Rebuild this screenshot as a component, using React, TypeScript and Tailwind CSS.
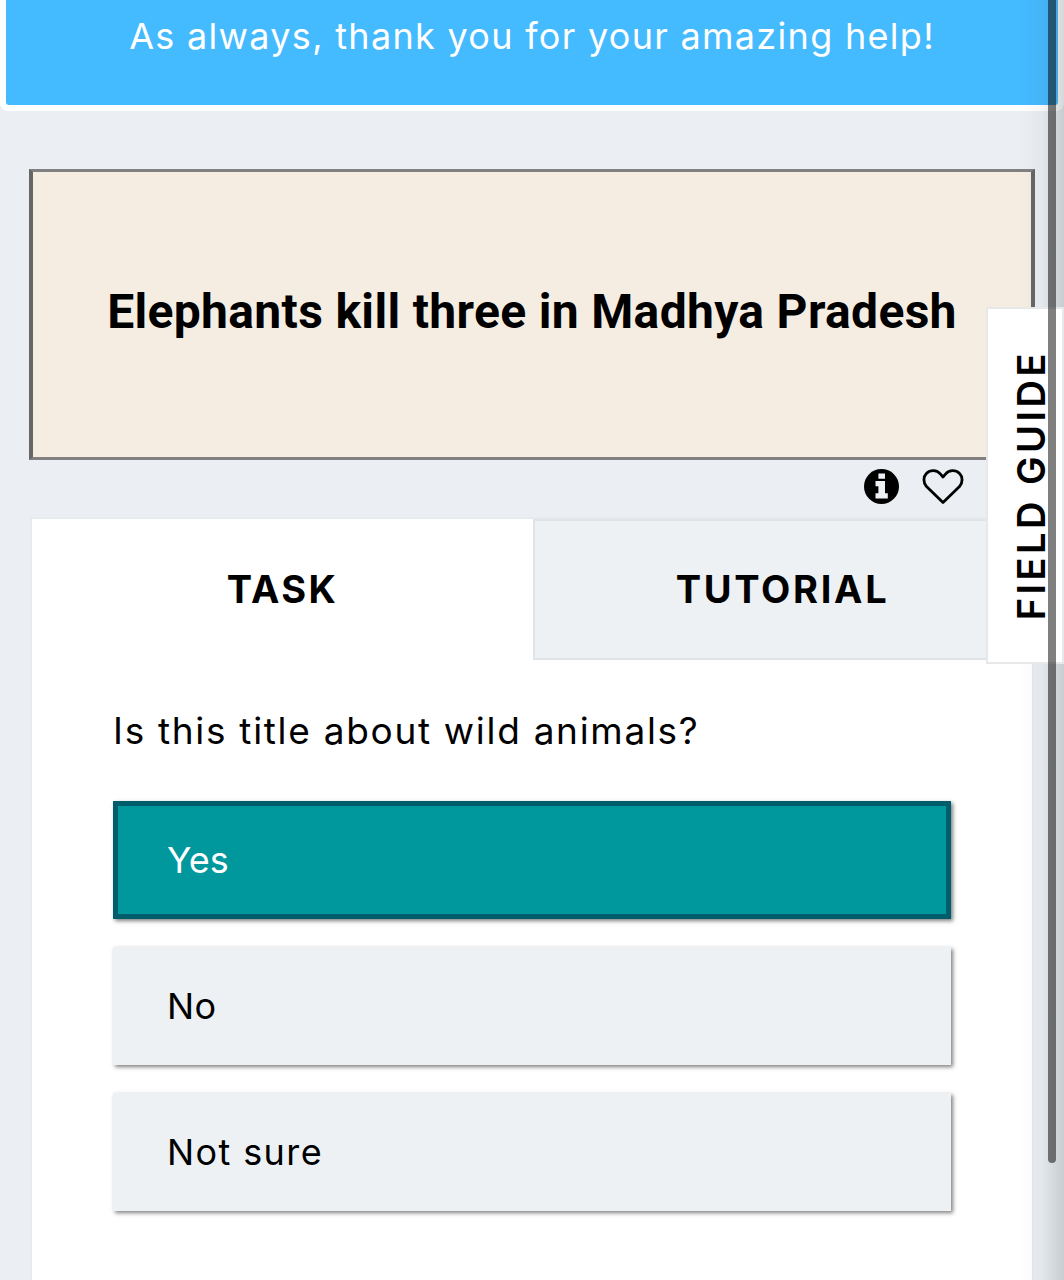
import { useState } from 'react';
import clsx from 'clsx';

type AnswerProps = {
  label: string;
  tracking: string;
  selected: boolean;
  onSelect: () => void;
};

const answers = [
  { label: 'Yes', tracking: 'tracking-normal' },
  { label: 'No', tracking: 'tracking-[0.3px]' },
  { label: 'Not sure', tracking: 'tracking-[1.4px]' },
];

const Answer = ({ label, tracking, selected, onSelect }: AnswerProps) => (
  <button
    type="button"
    onClick={onSelect}
    className={clsx(
      'flex items-center w-full h-[118px] pl-[49px] text-[36px] leading-none border-[5px] shadow-[2px_2px_4px_rgba(0,0,0,0.5)]',
      tracking,
      selected
        ? 'bg-[#00979d] border-[#005d69] text-white'
        : 'bg-[#edf1f4] border-[#edf1f4] text-black'
    )}
  >
    {label}
  </button>
);

const InfoIcon = () => (
  <svg viewBox="0 0 35 35" className="w-[35px] h-[35px]" aria-label="info">
    <circle cx="17.5" cy="17.5" r="17.5" fill="#000" />
    <path
      d="M14.4 4.4h6.6v5.4h-6.6zM11.5 12h9.5v12.2h2.8v5.2H11.5v-5.2h2.9v-7H11.5z"
      fill="#edf1f6"
    />
  </svg>
);

const HeartIcon = () => (
  <svg viewBox="0 0 42 36" className="w-[42px] h-[36px]" aria-label="favorite">
    <path
      d="M21 33.5 4.5 17.5C1 13.6 1.2 7.7 4.4 4.5 8.4.6 14.8.8 18.3 4.9L21 8l2.7-3.1C27.2.8 33.6.6 37.6 4.5c3.2 3.2 3.4 9.1-.1 13z"
      fill="none"
      stroke="#000"
      strokeWidth="2.8"
      strokeLinejoin="round"
    />
  </svg>
);

const App = () => {
  const [answer, setAnswer] = useState('Yes');

  return (
    <div className="relative flex flex-col w-[1064px] h-[1280px] overflow-hidden bg-[#ebeff4] font-['Inter',sans-serif] text-black">
      <header className="h-[111px] shrink-0 bg-white border-x-[6px] border-b-[6px] border-white rounded-b-lg">
        <div className="flex justify-center h-[105px] rounded-b-[3px] bg-[#44baff] pt-[14px]">
          <p className="text-[36px] leading-[44px] tracking-[1.3px] text-white whitespace-nowrap">
            As always, thank you for your amazing help!
          </p>
        </div>
      </header>

      <main className="flex flex-col flex-1 mt-[58px] ml-[29px] w-[1006px]">
        <div className="flex items-center justify-center h-[291px] shrink-0 border-x-[4px] border-y-[3px] border-x-[#666666] border-y-[#808080] bg-[#f5ede2] pb-[6px]">
          <h1 className="font-['Roboto',sans-serif] font-bold text-[48px] leading-none tracking-[0.33px] whitespace-nowrap">
            Elephants kill three in Madhya Pradesh
          </h1>
        </div>

        <div className="flex justify-end items-start gap-[23px] h-[57px] shrink-0 pt-[9px] pr-[71px]">
          <InfoIcon />
          <HeartIcon />
        </div>

        <section className="flex flex-col flex-1 ml-px w-[1004px] bg-white border-x-2 border-t-2 border-[#e8ebee]">
          <nav className="flex h-[141px] shrink-0 text-[38px] font-bold">
            <div className="flex items-center justify-center w-[501px] tracking-[2.4px]">TASK</div>
            <div className="flex items-center justify-center w-[499px] bg-[#edf1f4] border-2 border-[#dfe4e8] tracking-[2.7px]">
              TUTORIAL
            </div>
          </nav>

          <div className="pl-[81px] w-[919px]">
            <p className="pt-[48px] h-[141px] text-[37px] leading-[46px] tracking-[1.7px] whitespace-nowrap">
              Is this title about wild animals?
            </p>
            <div className="flex flex-col gap-[28px]">
              {answers.map(({ label, tracking }) => (
                <Answer
                  key={label}
                  label={label}
                  tracking={tracking}
                  selected={answer === label}
                  onSelect={() => setAnswer(label)}
                />
              ))}
            </div>
          </div>
        </section>
      </main>

      {/* edge shade, field guide tab and scrollbar float over the page */}
      <div className="absolute inset-y-0 right-0 w-[44px] bg-linear-to-r from-[#44505000] via-[#4450500c] to-[#44505038]" />
      <aside className="absolute right-0 top-[307px] flex items-center justify-center w-[78px] h-[357px] bg-white border-2 border-[#e6e8ea] pl-[12px]">
        <span className="[writing-mode:vertical-rl] rotate-180 text-[38px] leading-none font-semibold tracking-[3.5px] whitespace-nowrap">
          FIELD GUIDE
        </span>
      </aside>
      <div className="absolute right-[8px] top-0 w-[8px] h-[1163px] rounded-b-full bg-black/50" />
    </div>
  );
};

export default App;
